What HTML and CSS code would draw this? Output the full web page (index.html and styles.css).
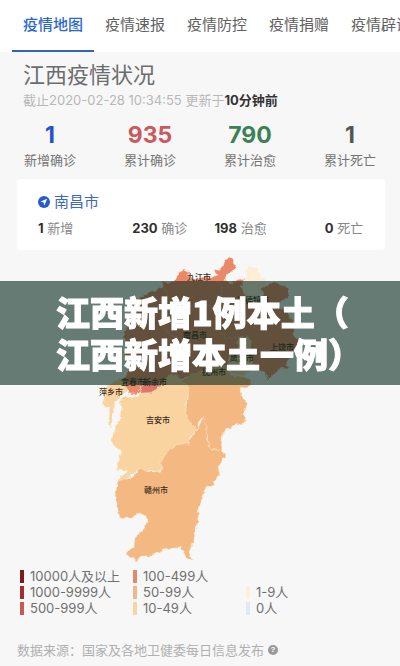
FILE: index.html
```html
<!DOCTYPE html>
<html lang="zh-CN">
<head>
  <meta charset="UTF-8">
  <meta name="viewport" content="width=device-width, initial-scale=1.0">
  <title>江西疫情状况</title>
  <link rel="stylesheet" href="styles.css">
</head>
<body>

  <nav class="tabs">
    <a class="tab active" href="#map">疫情地图</a>
    <a class="tab" href="#news">疫情速报</a>
    <a class="tab" href="#control">疫情防控</a>
    <a class="tab" href="#donate">疫情捐赠</a>
    <a class="tab" href="#rumor">疫情辟谣</a>
  </nav>

  <main>
    <header class="heading">
      <h1>江西疫情状况</h1>
      <p>截止2020-02-28 10:34:55 更新于<strong>10分钟前</strong></p>
    </header>

    <div class="stats">
      <div class="stat new"><strong>1</strong><span>新增确诊</span></div>
      <div class="stat confirmed"><strong>935</strong><span>累计确诊</span></div>
      <div class="stat cured"><strong>790</strong><span>累计治愈</span></div>
      <div class="stat dead"><strong>1</strong><span>累计死亡</span></div>
    </div>

    <section class="city-card">
      <h2>
        <svg class="locate" viewBox="0 0 12 12" aria-hidden="true">
          <circle cx="6" cy="6" r="6" fill="#2a5bcd"/>
          <path d="M9.2 2.8 2.6 5.6 5.6 6.4 6.4 9.4Z" fill="#fff"/>
        </svg>
        南昌市
      </h2>
      <div class="city-stats">
        <span><b>1</b> 新增</span>
        <span><b>230</b> 确诊</span>
        <span><b>198</b> 治愈</span>
        <span><b>0</b> 死亡</span>
      </div>
    </section>

    <svg class="map" id="map" viewBox="0 250 400 318" role="img" aria-label="江西省疫情地图">
      <!-- 让边界线呈不规则锯齿 -->
      <filter id="rough">
        <feTurbulence type="fractalNoise" baseFrequency="0.18" numOctaves="2" seed="4"/>
        <feDisplacementMap in="SourceGraphic" scale="5" xChannelSelector="R" yChannelSelector="G"/>
      </filter>
      <g filter="url(#rough)">
        <g stroke="#fbe3c4" stroke-width="0.5" stroke-linejoin="round">
          <!-- 景德镇 -->
          <path class="c1" d="M245 282 248 276 246 270 250 266 256 268 260 277 266 280 266 286 259 294 252 304 244 300 241 290Z"/>
          <!-- 九江 / 宜春 / 南昌 / 上饶 -->
          <path class="c100" d="M123 379 129 372 128 364 124 357 128 346 124 336 127 328 124 321 133 318 134 310 141 304 139 298 148 293 156 291 163 286 163 281 168 283 176 279 178 273 184 270 189 272 189 278 196 280 204 277 212 278 217 275 214 271 221 269 224 262 229 257 234 260 235 264 236 263 235 270 227 275 225 280 231 283 237 281 244 279 241 287 245 295 252 304 259 303 263 295 261 289 268 285 274 282 283 285 289 289 288 298 281 301 279 305 289 315 294 324 293 334 299 340 297 346 293 350 291 358 286 361 288 368 280 367 277 372 272 377 268 380 264 372 258 370 256 365 250 362 244 366 238 369 226 372 217 376 206 379 198 376 187 378 178 380 168 383 160 389 147 391 139 394 129 386Z"/>
          <!-- 鹰潭 -->
          <path class="c10" d="M228 368 230 354 238 349 239 337 247 336 252 343 250 354 254 360 250 371 242 376 233 374Z"/>
          <!-- 萍乡 -->
          <path class="c10" d="M104 398 106 386 113 383 121 378 129 385 126 391 119 397 115 402 113 414 111 428 109 421 110 407 102 405Z"/>
          <!-- 新余 -->
          <path class="c100" d="M126 386 133 381 141 384 140 390 136 394 129 394 127 389Z"/>
          <path class="c500" d="M141 382 149 381 160 382 158 389 151 393 145 393 141 395Z"/>
          <!-- 吉安 -->
          <path class="c10" d="M125 396 138 397 142 393 150 393 159 388 165 380 170 374 177 376 181 381 189 385 188 398 185 406 187 417 194 426 197 429 189 437 189 444 179 444 173 450 168 451 164 458 161 463 162 470 158 472 151 470 145 471 140 468 133 474 125 480 118 482 120 476 127 473 126 469 117 471 119 462 121 449 113 446 112 438 115 427 120 418 122 407 119 401Z"/>
          <!-- 抚州 -->
          <path class="c50" d="M181 381 191 374 201 371 210 366 226 366 232 375 244 377 251 381 249 386 241 388 242 396 247 404 244 412 246 421 239 425 225 429 221 437 222 451 215 449 212 451 208 442 206 434 205 424 202 417 198 423 197 429 188 420 185 409 188 400 189 386Z"/>
          <!-- 赣州 -->
          <path class="c50" d="M118 482 133 477 140 468 150 472 162 472 161 462 168 450 180 444 189 444 190 438 199 426 203 417 207 429 206 437 212 451 219 449 223 452 225 457 220 463 217 467 219 474 213 484 206 487 203 497 198 512 199 522 195 530 194 541 189 551 192 560 187 558 181 548 170 548 160 551 152 556 142 556 136 562 126 554 134 547 135 537 141 532 147 525 147 517 140 513 133 517 120 519 118 509 115 495Z"/>
        </g>
        <path d="M163 286 168 295 164 306 170 313 180 315 190 309 199 301 211 306 219 318 217 330 227 339 239 337M216 281 222 288 220 303 227 309M171 314 164 324 169 334 179 338 186 348 195 353" fill="none" stroke="#f9dcc0" stroke-opacity=".5" stroke-width="0.8"/>
      </g>
      <g class="city-names">
        <text x="199" y="280">九江市</text>
        <text x="253" y="303">景德镇市</text>
        <text x="195" y="338">南昌市</text>
        <text x="282" y="350">上饶市</text>
        <text x="242" y="361">鹰潭市</text>
        <text x="214" y="375">抚州市</text>
        <text x="133" y="385">宜春市</text>
        <text x="155" y="385">新余市</text>
        <text x="111" y="395">萍乡市</text>
        <text x="158" y="423">吉安市</text>
        <text x="156" y="493">赣州市</text>
      </g>
    </svg>

    <ul class="legend">
      <li class="l10000">10000人及以上</li>
      <li class="l1000">1000-9999人</li>
      <li class="l500">500-999人</li>
      <li class="l100">100-499人</li>
      <li class="l50">50-99人</li>
      <li class="l10">10-49人</li>
      <li class="l1">1-9人</li>
      <li class="l0">0人</li>
    </ul>
  </main>

  <footer class="source">
    数据来源：国家及各地卫健委每日信息发布
    <button type="button" aria-label="数据说明">?</button>
  </footer>

  <div class="banner">江西新增1例本土（<br>江西新增本土一例）</div>

</body>
</html>
```
FILE: styles.css
```css
* {
  box-sizing: border-box;
}

body {
  margin: 0;
  background-color: #f7f7f7;
  color: #666;
  font-family: Inter, "Noto Sans CJK SC", sans-serif;
  font-size: 13px;
  line-height: 16px;
  overflow-x: hidden;
}

h1, h2, p, ul {
  margin: 0;
  padding: 0;
  font-weight: normal;
}

/* 顶部标签 */
.tabs {
  display: flex;
  height: 52px;
  padding-left: 12px;
  background-color: #fff;
  overflow: hidden;
}

.tab {
  flex: none;
  padding: 0 11px;
  color: #606060;
  font-size: 15px;
  line-height: 50px;
  text-decoration: none;
}

.tab.active {
  color: #2b68cc;
  font-weight: 500;
  border-bottom: 2px solid #3465b5;
}

.heading {
  padding: 10px 23px 0;
}

.heading h1 {
  color: #6b6d6f;
  font-size: 22px;
  line-height: 26px;
}

.heading p {
  margin-top: 4px;
  color: #b8b8b8;
}

.heading p strong {
  color: #333;
}

.stats {
  display: grid;
  grid-template-columns: repeat(4, 1fr);
  padding-top: 15px;
}

.stat {
  display: flex;
  flex-direction: column;
  align-items: center;
  gap: 5px;
  color: #747474;
}

.stat strong {
  font-size: 23px;
  line-height: 24px;
}

.new strong {
  color: #2453c5;
}

.confirmed strong {
  color: #c9595c;
}

.cured strong {
  color: #3b8154;
}

.dead strong {
  color: #555;
}

.city-card {
  margin: 11px 15px 0 17px;
  padding: 13px 0 14px 21px;
  background-color: #fff;
  border-radius: 4px;
}

.city-card h2 {
  display: flex;
  align-items: center;
  gap: 4px;
  color: #3e69bd;
  font-size: 15px;
  line-height: 20px;
}

.locate {
  width: 12px;
  height: 12px;
}

.city-stats {
  display: grid;
  grid-template-columns: 94fr 82fr 110fr 60fr;
  margin-top: 8px;
  color: #888;
}

.city-stats b {
  color: #2f2f2f;
}

/* 地图 */
.map {
  display: block;
  width: 100%;
}

.c500 {
  fill: #e0746b;
}

.c100 {
  fill: #ea8969;
}

.c50 {
  fill: #f4b983;
}

.c10 {
  fill: #fad4a0;
}

.c1 {
  fill: #fdeed6;
}

.city-names {
  fill: #3a2c20;
  font-size: 8px;
  font-weight: 500;
  text-anchor: middle;
}

.legend {
  display: grid;
  grid-template-rows: repeat(3, 16px);
  grid-template-columns: repeat(3, 113px);
  grid-auto-flow: column;
  padding-left: 20px;
  list-style: none;
  color: #707070;
}

.legend li {
  display: flex;
  align-items: center;
  gap: 6px;
  white-space: nowrap;
}

.legend li::before {
  content: "";
  width: 4px;
  height: 13px;
}

.legend .l10000::before {
  background-color: #7a1c20;
}

.legend .l1000::before {
  background-color: #a3302d;
}

.legend .l500::before {
  background-color: #c95955;
}

.legend .l100::before {
  background-color: #e08a6c;
}

.legend .l50::before {
  background-color: #efb88b;
}

.legend .l10::before {
  background-color: #f8d5a4;
}

.legend .l1 {
  grid-area: 2 / 3;
}

.legend .l0 {
  grid-area: 3 / 3;
}

.legend .l1::before {
  background-color: #fdf0d9;
}

.legend .l0::before {
  background-color: #e2e8f3;
}

.source {
  display: flex;
  align-items: center;
  gap: 4px;
  padding: 26px 17px 8px;
  color: #b0b0b0;
}

.source button {
  width: 10px;
  height: 10px;
  padding: 0;
  border: none;
  border-radius: 50%;
  background-color: #999;
  color: #fff;
  font-size: 8px;
  font-weight: bold;
  line-height: 10px;
}

/* 覆盖在页面上的标题条 */
.banner {
  position: fixed;
  top: 50%;
  left: 0;
  right: 0;
  transform: translateY(-50%);
  padding: 10px 0 10px 14%;
  background-color: rgba(7, 40, 30, 0.6);
  color: #fff;
  font-family: "Noto Sans CJK SC", sans-serif;
  font-size: 34px;
  font-weight: 900;
  line-height: 42px;
  white-space: nowrap;
  -webkit-text-stroke: 1px #fff;
}
```
